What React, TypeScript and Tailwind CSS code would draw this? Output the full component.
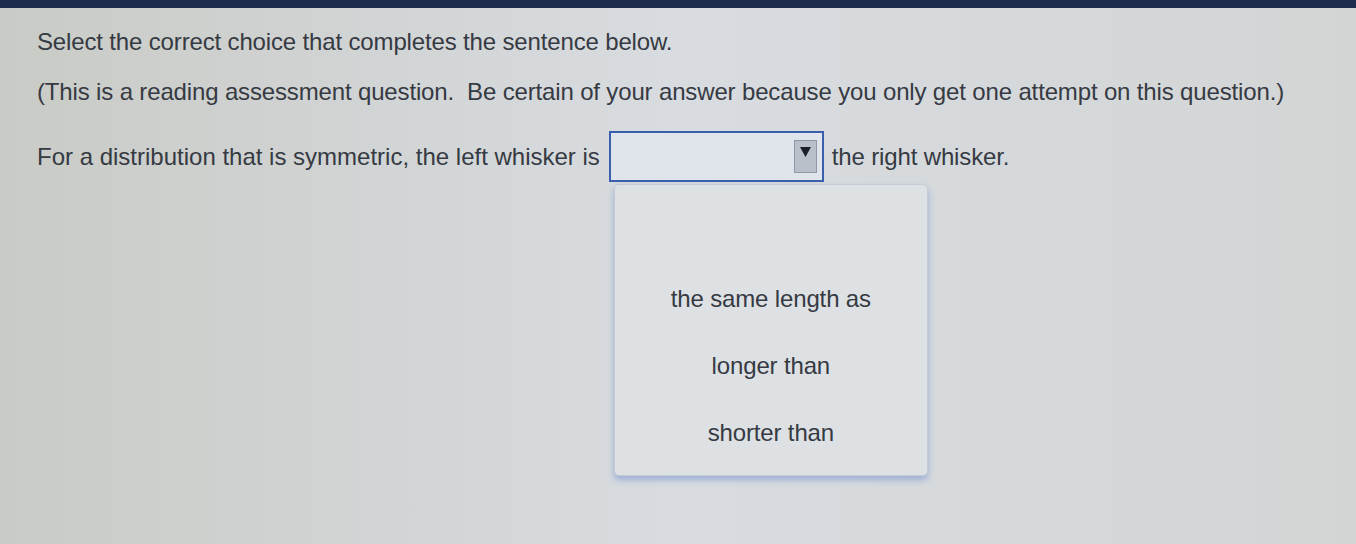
import React from 'react';

const options = ['the same length as', 'longer than', 'shorter than'];

export default function App() {
  return (
    <div className="w-[1356px] h-[544px] overflow-hidden bg-gradient-to-r from-[#c9cbc6] via-[#d8dce0] to-[#d3d5d5] text-[#363a43] font-['Liberation_Sans',Arial,sans-serif]">
      {/* top bar */}
      <div className="h-[8px] bg-[#1f2b4c]" />

      <div className="pl-[37px] pt-[20px]">
        <p className="text-[24px] leading-[28px] tracking-[-0.15px]">
          Select the correct choice that completes the sentence below.
        </p>
        <p className="mt-[22px] text-[24px] leading-[28px] tracking-[-0.15px] whitespace-pre">
          (This is a reading assessment question.  Be certain of your answer because you only get one attempt on this question.)
        </p>

        <div className="mt-[25px] flex items-center text-[24px] leading-[28px]">
          <span>For a distribution that is symmetric, the left whisker is</span>
          <div className="relative ml-[9px] mr-[8px]">
            <div className="w-[215px] h-[51px] border-2 border-[#3a5fae] bg-[#e0e5eb] flex items-center justify-end pr-[5px]">
              <div className="w-[23px] h-[33px] bg-[#b9c0c9] border border-[#8e98a6] flex items-start justify-center pt-[6px]">
                <svg width="11" height="10" viewBox="0 0 11 10">
                  <path d="M0 0 H11 L5.5 10 Z" fill="#1c1f26" />
                </svg>
              </div>
            </div>

            {/* open menu */}
            <div className="absolute left-[5px] top-[53px] w-[314px] h-[292px] rounded-[5px] border border-[#c4cbd4] bg-[#dde1e4] shadow-[0_4px_6px_rgba(110,140,210,0.55)] flex flex-col items-center pt-[100px] gap-[39px]">
              {options.map(o => (
                <div key={o} className="text-[24px] leading-[28px] tracking-[-0.15px]">
                  {o}
                </div>
              ))}
            </div>
          </div>
          <span className="tracking-[-0.15px]">the right whisker.</span>
        </div>
      </div>
    </div>
  );
}
